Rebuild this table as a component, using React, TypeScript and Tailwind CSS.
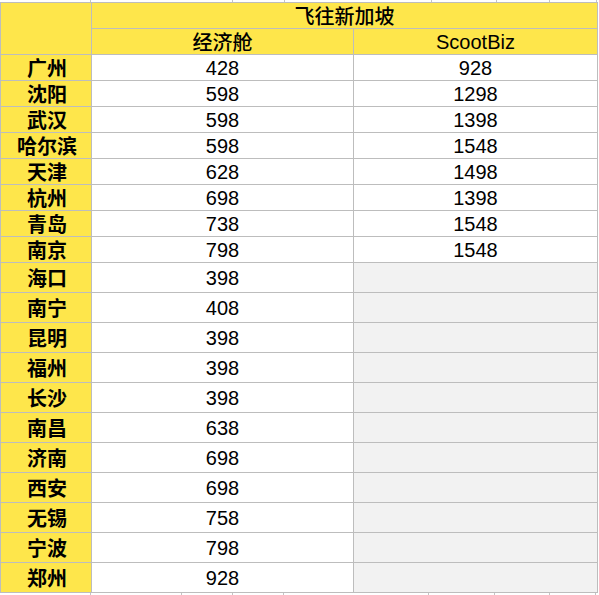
const cn = '"Noto Sans CJK SC", "Noto Sans", sans-serif';
const num = '"Liberation Sans", Arial, sans-serif';

type Row = { city: string; eco: string; biz?: string };

const rows: Row[] = [
  { city: "广州", eco: "428", biz: "928" },
  { city: "沈阳", eco: "598", biz: "1298" },
  { city: "武汉", eco: "598", biz: "1398" },
  { city: "哈尔滨", eco: "598", biz: "1548" },
  { city: "天津", eco: "628", biz: "1498" },
  { city: "杭州", eco: "698", biz: "1398" },
  { city: "青岛", eco: "738", biz: "1548" },
  { city: "南京", eco: "798", biz: "1548" },
  { city: "海口", eco: "398" },
  { city: "南宁", eco: "408" },
  { city: "昆明", eco: "398" },
  { city: "福州", eco: "398" },
  { city: "长沙", eco: "398" },
  { city: "南昌", eco: "638" },
  { city: "济南", eco: "698" },
  { city: "西安", eco: "698" },
  { city: "无锡", eco: "758" },
  { city: "宁波", eco: "798" },
  { city: "郑州", eco: "928" },
];

// widths of the hidden spreadsheet columns peeking out above and below
const topTicks = [91, 142, 52, 147, 65, 53, 47];
const bottomTicks = [91, 91, 51, 51, 145, 66, 55, 46];

const Ticks = ({ widths, h }: { widths: number[]; h: string }) => (
  <div className={`flex ${h} w-[599px] bg-white`}>
    {widths.map((w, i) => (
      <div key={i} className="shrink-0 border-r border-[#c4c4c4]" style={{ width: w }} />
    ))}
  </div>
);

export default function App() {
  return (
    <div className="w-[599px] h-[595px] bg-white overflow-hidden">
      <Ticks widths={topTicks} h="h-[2px]" />
      <div
        className="grid w-[598px] grid-cols-[90px_261px_243px] gap-px bg-[#bdbdbd] border border-[#bdbdbd] text-black text-[20px] leading-none"
        style={{ fontFamily: num }}
      >
        <div className="row-span-2 bg-[#fee64b]" />
        <div
          className="col-span-2 h-[25px] bg-[#fee64b] flex items-center justify-center font-medium"
          style={{ fontFamily: cn }}
        >
          飞往新加坡
        </div>
        <div
          className="h-[25px] bg-[#fee64b] flex items-center justify-center font-medium"
          style={{ fontFamily: cn }}
        >
          经济舱
        </div>
        <div className="h-[25px] bg-[#fee64b] flex items-center justify-center">ScootBiz</div>

        {rows.map((r, i) => {
          const tall = i >= 8 ? "h-[29px]" : "h-[25px]";
          return [
            <div
              key={r.city + "c"}
              className={`${tall} bg-[#fee64b] flex items-center justify-center font-bold pl-[2px]`}
              style={{ fontFamily: cn }}
            >
              {r.city}
            </div>,
            <div key={r.city + "e"} className={`${tall} bg-white flex items-center justify-center`}>
              {r.eco}
            </div>,
            <div
              key={r.city + "b"}
              className={`${tall} ${r.biz ? "bg-white" : "bg-[#f2f2f2]"} flex items-center justify-center`}
            >
              {r.biz}
            </div>,
          ];
        })}
      </div>
      <Ticks widths={bottomTicks} h="h-[3px]" />
    </div>
  );
}
